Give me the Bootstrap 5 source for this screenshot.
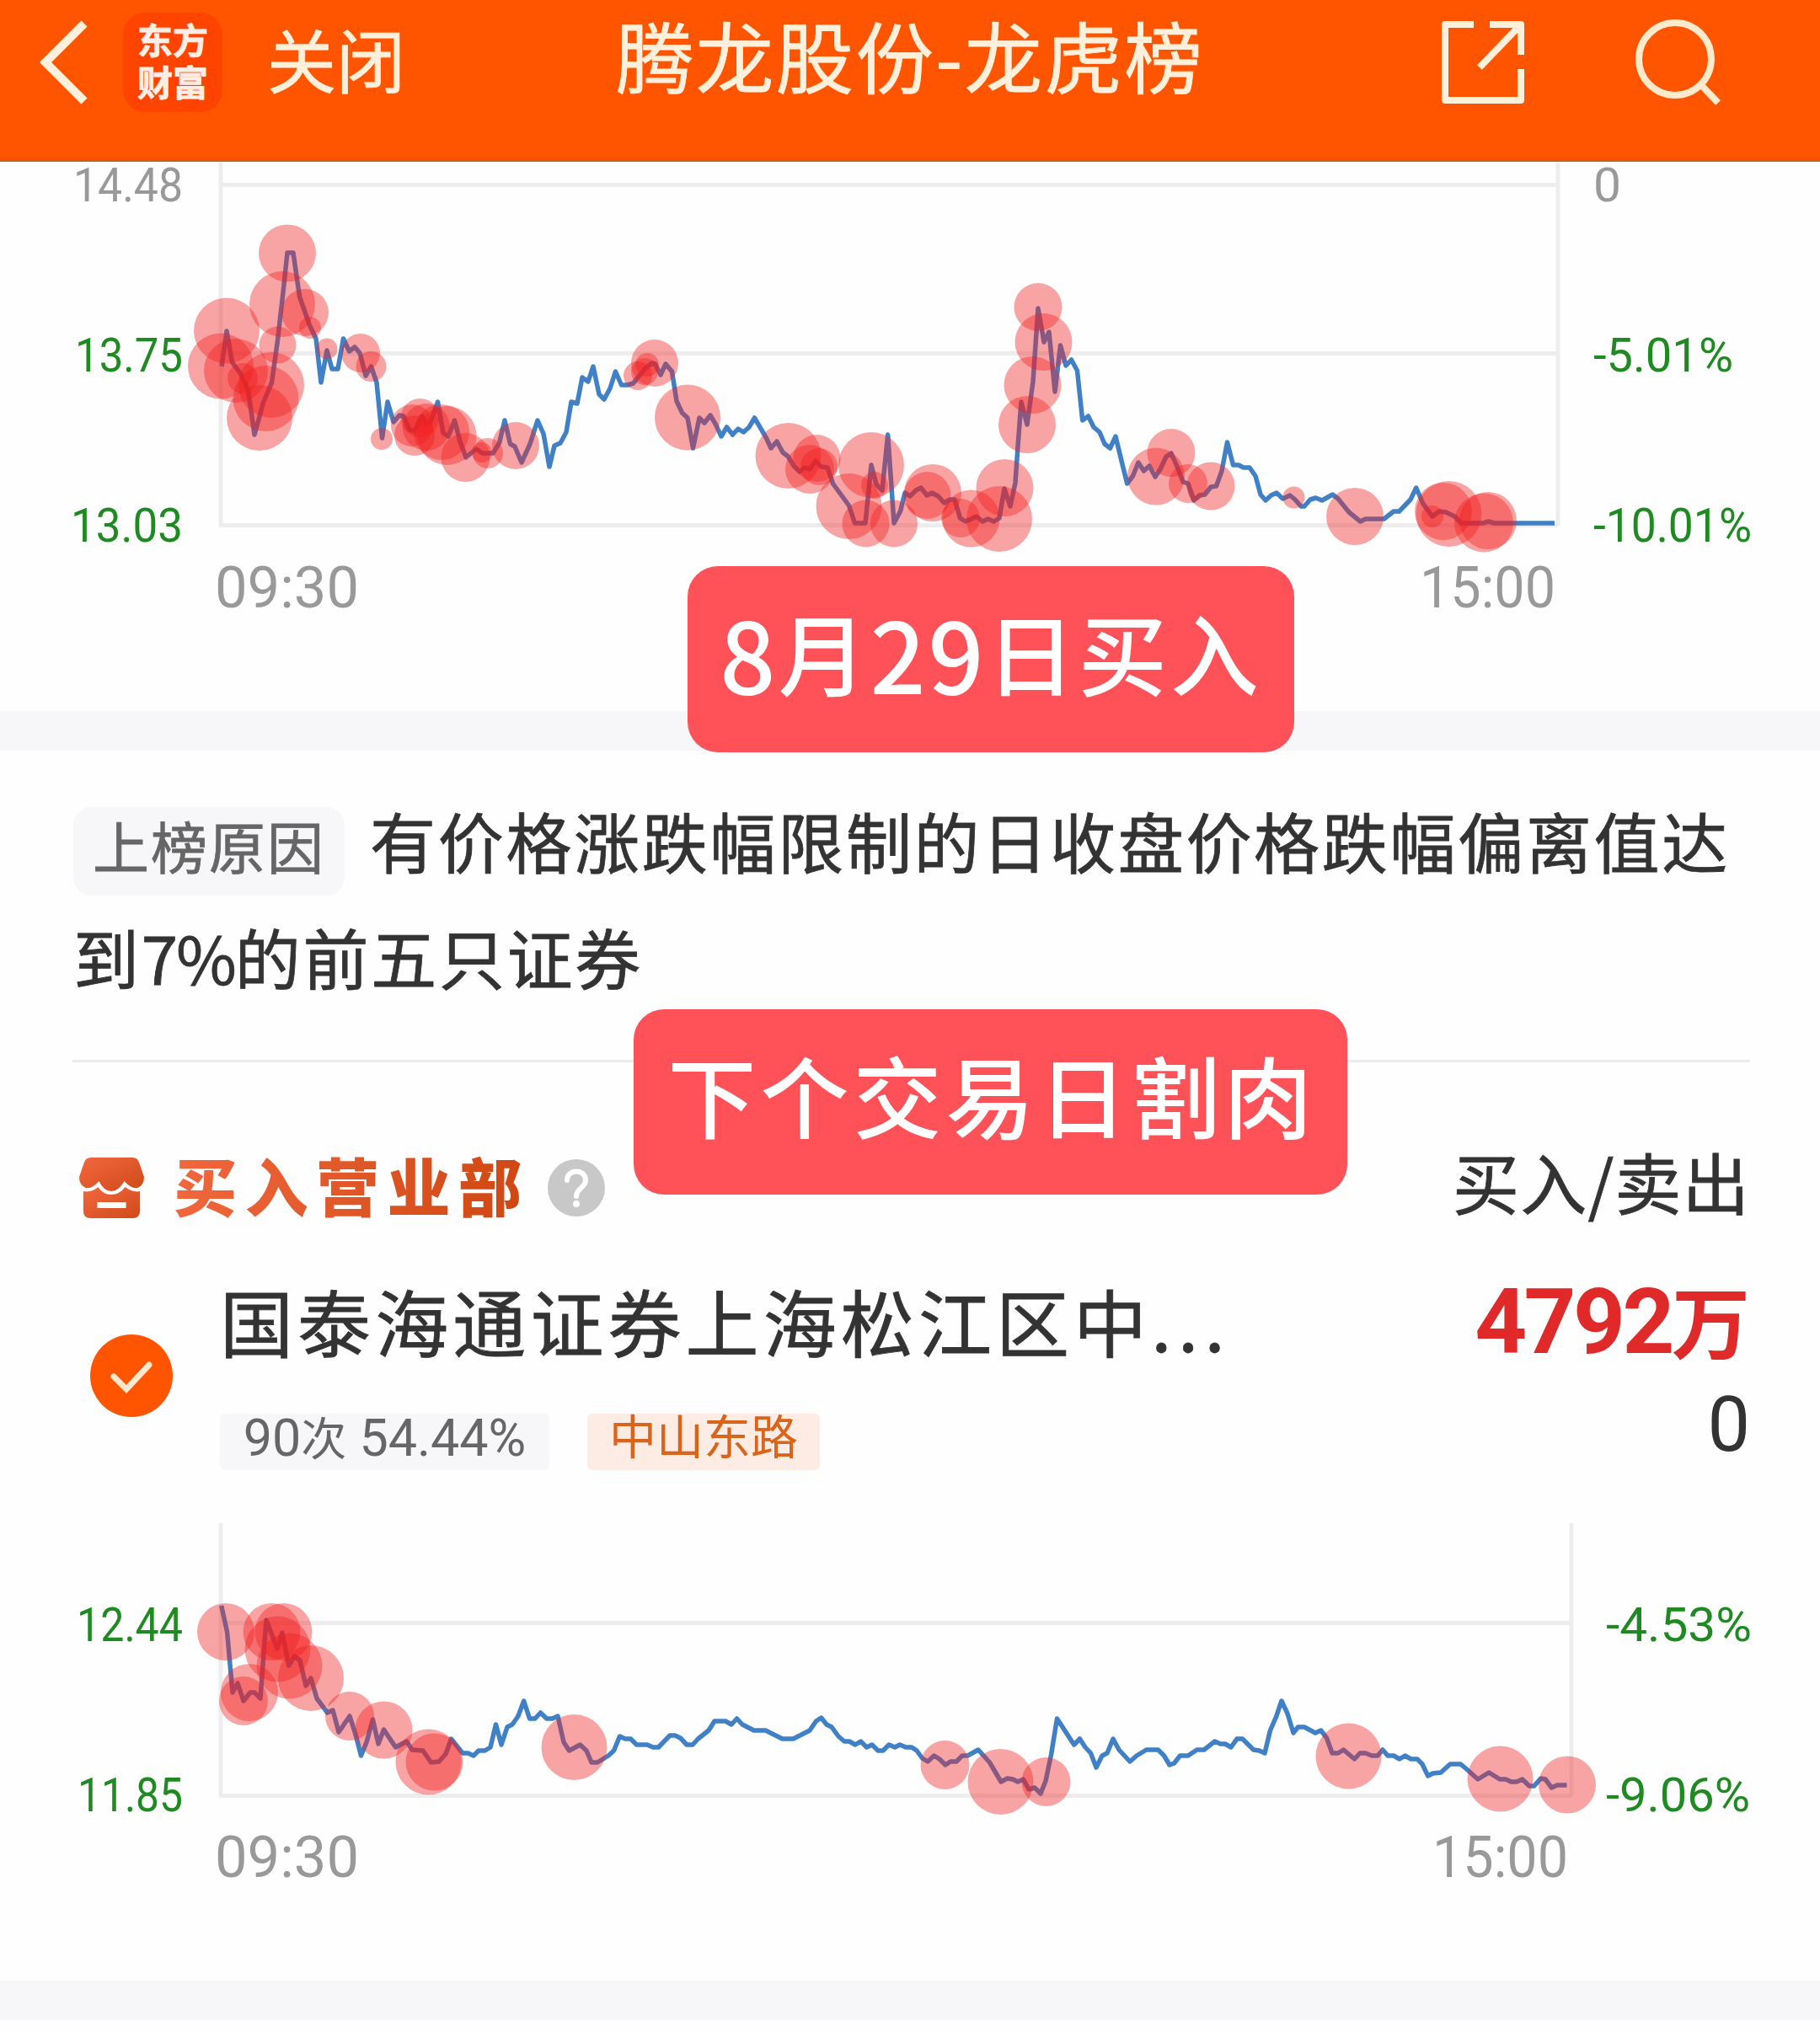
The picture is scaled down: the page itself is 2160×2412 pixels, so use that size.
<!DOCTYPE html>
<html lang="zh-CN">
<head>
<meta charset="utf-8">
<meta name="viewport" content="width=device-width, initial-scale=1">
<title>腾龙股份-龙虎榜</title>
<link href="https://cdn.jsdelivr.net/npm/bootstrap@5.3.0/dist/css/bootstrap.min.css" rel="stylesheet">
<style>
  body { font-family: Roboto, "Noto Sans CJK SC", sans-serif; background: #fefefe; color: #333; overflow-x: hidden; }
  svg { display: block; flex: none; }
  .cjk { font-family: "Noto Sans CJK SC", sans-serif; }
  .topbar, .reason, .broker-name, .side-label { -webkit-text-stroke: .8px currentColor; }
  .topbar { height: 192px; background: #ff5500; color: #fff0dc; border-bottom: 2px solid #cf5a1a;
            display: grid; grid-template-columns: 1fr auto 1fr; padding-bottom: 42px; }
  .topbar-left { padding-left: 40px; }
  .topbar-right { padding-right: 114px; gap: 122px; }
  .brand-tile { width: 118px; height: 118px; border-radius: 26px; background: #ff4400; margin-left: 34px;
               font-size: 42px; line-height: 50px; font-weight: 700; color: #ffeee6; padding-bottom: 6px; }
  .close-link { font-size: 82px; line-height: 1; margin-left: 53px; padding-bottom: 10px; }
  .page-title { font-size: 92.500px; line-height: 1; letter-spacing: 2.300px; padding-bottom: 19px; font-weight: 400; margin: 0; }
  .band { height: 47px; background: #f7f7fa; }
  .note { background: #ff5158; color: #fff; border-radius: 36px; white-space: nowrap; font-weight: 500; z-index: 3; padding-bottom: 20px; }
  .note-buy { left: 816px; top: 672px; width: 720px; height: 221px; font-size: 105px; letter-spacing: 4px; }
  .note-buy b { font: 500 116px/1 "Noto Sans CJK SC", sans-serif; letter-spacing: 3px; }
  .note-cut { left: 752px; top: 1198px; width: 847px; height: 220px; font-size: 105px; letter-spacing: 5px; padding-left: 4px; }
  .reason { padding: 37px 78px 0 87px; font-size: 78px; line-height: 138px; letter-spacing: 2.700px; }
  .reason p { height: 276px; }
  .reason-num { letter-spacing: -2px; }
  .reason-tag { width: 322px; height: 105px; margin: 30px 30px 0 0; padding-bottom: 17px; vertical-align: top;
                background: #f7f7fa; border-radius: 22px; color: #666; font-size: 67px; line-height: 1; letter-spacing: 2px; }
  .rule { margin: 54px 83px 0 86px; height: 3px; background: #ebebeb; }
  .dept-head { margin-top: 99px; height: 100px; padding: 0 83px 0 94px; }
  .dept-title { font-size: 75px; line-height: 100px; font-weight: 900; letter-spacing: 9.500px; margin: 0 0 0 35px; padding-bottom: 8px;
                background: linear-gradient(100deg, #f2683f, #ce4610); -webkit-background-clip: text; color: transparent; }
  .help-mark { margin-left: 21px; }
  .side-label { font-size: 79px; line-height: 100px; padding-bottom: 16px; letter-spacing: 1.200px; }
  .broker { margin-top: 57px; height: 228px; padding: 0 83px 0 107px; }
  .broker-check { margin-top: 67px; }
  .broker-main { margin-left: 56px; }
  .broker-name { font-size: 87px; line-height: 100px; letter-spacing: 5.100px; }
  .broker-name span { letter-spacing: 7.500px; }
  .chips { margin-top: 61px; gap: 45px; }
  .chip { height: 67px; border-radius: 6px; font-size: 56px; line-height: 58px; }
  .chip-rate { width: 391px; background: #f7f7fa; color: #666; white-space: nowrap; font-size: 61px; }
  .chip-rate span { font-size: 54px; }
  .chip-tag { width: 276px; background: #fdece4; color: #d9641c; }
  .amount { font-size: 108px; line-height: 100px; font-weight: 700; color: #e02a2a; letter-spacing: -3.500px; white-space: nowrap; margin-top: 2px; }
  .amount span { font-size: 93px; letter-spacing: 0; }
  .amount-out { font-size: 90px; line-height: 90px; margin-top: 22px; }
  .grid-line { stroke: #ededed; stroke-width: 5; fill: none; }
  .price { stroke: #4080c6; stroke-width: 5.500; fill: none; stroke-linejoin: round; }
  .dots circle { fill: #f21e1e; fill-opacity: .4; }
  .axis { font-family: Roboto, sans-serif; font-size: 56px; fill: #1f8a22; }
  .axis .flat { fill: #999; }
  .axis .hour { fill: #999; font-size: 68px; }
</style>
<script src="https://cdn.jsdelivr.net/npm/bootstrap@5.3.0/dist/js/bootstrap.bundle.min.js"></script>
</head>
<body>
<div class="position-relative">
  <header class="topbar cjk">
    <div class="topbar-left d-flex align-items-center">
      <svg width="72" height="104" viewBox="0 0 72 104"><path d="M60 6 14 52l46 46" fill="none" stroke="#fff0dc" stroke-width="10"/></svg>
      <div class="brand-tile d-flex flex-column align-items-center justify-content-center"><span>东方</span><span>财富</span></div>
      <a class="close-link text-reset text-decoration-none" href="#">关闭</a>
    </div>
    <h1 class="page-title align-self-center">腾龙股份-龙虎榜</h1>
    <div class="topbar-right d-flex align-items-center justify-content-end">
      <svg width="104" height="104" viewBox="0 0 104 104" fill="none" stroke="#fff0dc" stroke-width="8" stroke-linejoin="round"><path d="M41 7H7v90h90V60M60 7h37v36M97 7 48 58"/></svg>
      <svg width="112" height="112" viewBox="0 0 112 112" fill="none" stroke="#ffeacb" stroke-width="8"><circle cx="54" cy="52" r="43"/><path d="m85 83 20 21"/></svg>
    </div>
  </header>

  <svg width="2160" height="652" viewBox="0 192 2160 652">
    <path class="grid-line" d="M260 219.5H1849M260 419.5H1849M260 623.5H1849M262 192V624M1849 192V624"/>
    <polyline class="price" points="263,435 269,393 275.500,430 285,443 294.500,463 302,516 312.500,478 322.500,454 329.500,404 336,347 341,300 348,300 355.500,352 367,385 375,402 381,454 388,416 394,438 401,438 407.500,402 414.500,417 421,412 427,419 434,446 440.500,435 447,454 453.500,520 460,477 467,501 474,493 479,494 486,510 492,512 501,494 506,504 511,501 519.500,477 526,514 532,518 539.500,499 546,524 553,543 565,533 572.500,538 585,538 592.500,526 599,499 605.500,527 611,530 619,549 629,527 638,499 645,515 652,554 658,529 665,526 672,513 678,477 685,479 691,448 698,453 704,435 711,468 717,474 724,461 730.500,441 737.500,457 745,457 751.500,455 766,437 774,431 777.500,432 784,445 790,432 797.500,441 803,476 809.500,490 816,496 822.500,532 830,496 836,502 843,493 849.500,504 856,518 862.500,507 869.500,516 876,509 882.500,513 889,507 895.500,496 909.500,520 915,532 922,524 929,537 935.500,542 942,553 949,560 955,555 961,557 968,547 974.500,554 982,555 988.500,574 1007.500,600 1014.500,621 1027,621 1034,552 1040,575 1047,582 1053.700,516 1061,621 1068.500,607 1074,585 1080,589 1087,582 1093,579 1100,588 1106,585 1113.500,589 1120.500,597 1127.500,593 1133,593 1139.500,615 1146,619 1159,613 1166,619 1172.500,616 1179.500,619 1186,615 1192,580 1199,601 1205,573 1208,530 1212,477 1219,504 1226,453 1232,366 1239,406 1245,394 1252,465 1258.500,410 1265,434 1271.500,427 1278.500,440 1284.700,499 1291.500,494 1298,507 1305,513 1311,527 1317.500,532 1324,518 1331,547 1337.700,574 1344.500,565 1351,549 1357.500,559 1364,553 1371,566 1377,557 1384,542 1390,538 1397.500,555 1404,572 1410,574 1417,594 1423.500,588 1430,587 1437,578 1443.500,577 1450,559 1456.500,525 1463.500,552 1470,552 1476,555 1483,555 1490,565 1496,587 1502,594 1508.500,588 1515,585 1522.500,592 1531,588 1537,593 1544,601 1548,601 1555,593 1561.500,591 1569,594 1581.500,587 1588,592 1601,608 1614.500,619 1620.500,616 1642.500,616 1654,607 1660.500,607 1674,593 1680.700,579 1689,598 1700,613 1708,607 1716,608 1726.500,613 1734,621 1760,621 1766.500,619 1773,621 1845,621"/>
    <g class="dots">
      <circle cx="341" cy="300.500" r="34"/><circle cx="335" cy="361" r="39"/><circle cx="362" cy="371" r="28"/><circle cx="368" cy="389" r="13"/>
      <circle cx="269" cy="392.500" r="39"/><circle cx="262" cy="434.500" r="39"/><circle cx="280" cy="440" r="38"/><circle cx="288" cy="449" r="18"/>
      <circle cx="329.500" cy="409.500" r="22"/><circle cx="322" cy="457" r="39"/><circle cx="315.500" cy="473" r="39"/><circle cx="308" cy="496" r="39"/>
      <circle cx="388" cy="414" r="12.500"/><circle cx="428" cy="419" r="23"/><circle cx="440.500" cy="435" r="18"/><circle cx="453" cy="521" r="13"/>
      <circle cx="498.500" cy="496" r="23"/><circle cx="489" cy="505" r="25"/><circle cx="492" cy="517" r="24"/><circle cx="506" cy="507" r="28"/>
      <circle cx="530.500" cy="517" r="35"/><circle cx="524" cy="513" r="33"/><circle cx="552.500" cy="543" r="29"/><circle cx="572" cy="537" r="12"/>
      <circle cx="579" cy="538" r="18"/><circle cx="612" cy="529" r="28"/><circle cx="777" cy="431" r="28"/><circle cx="757" cy="446" r="17"/>
      <circle cx="768" cy="433" r="14"/><circle cx="765" cy="441" r="16"/><circle cx="816" cy="495.500" r="39"/><circle cx="935.500" cy="541" r="39"/>
      <circle cx="969.500" cy="544" r="28"/><circle cx="961" cy="557" r="29"/><circle cx="972" cy="554" r="22"/><circle cx="1034" cy="552" r="39"/>
      <circle cx="1007.500" cy="601" r="39"/><circle cx="1038" cy="576" r="16"/><circle cx="1027.500" cy="621.500" r="28"/><circle cx="1061" cy="621.500" r="28"/>
      <circle cx="1107" cy="585" r="34"/><circle cx="1100.500" cy="588" r="28"/><circle cx="1152.500" cy="615.500" r="34"/><circle cx="1140" cy="615" r="23"/>
      <circle cx="1186" cy="616" r="39"/><circle cx="1192.500" cy="579" r="34"/><circle cx="1219" cy="504" r="34"/><circle cx="1225.500" cy="457" r="34"/>
      <circle cx="1238.500" cy="406" r="34"/><circle cx="1232" cy="364.500" r="28.500"/><circle cx="1372" cy="565.500" r="34"/><circle cx="1390" cy="537.500" r="28.500"/>
      <circle cx="1410" cy="574" r="23"/><circle cx="1437" cy="577" r="28.500"/><circle cx="1535.500" cy="590.500" r="13"/><circle cx="1608" cy="613" r="34"/>
      <circle cx="1719.500" cy="610" r="39"/><circle cx="1713" cy="607" r="34"/><circle cx="1700" cy="613" r="13"/><circle cx="1766" cy="618" r="34"/><circle cx="1761" cy="620.500" r="35"/>
    </g>
    <g class="axis">
      <text class="flat" x="87" y="239" textLength="130" lengthAdjust="spacingAndGlyphs">14.48</text>
      <text x="89" y="441" textLength="128" lengthAdjust="spacingAndGlyphs">13.75</text>
      <text x="84" y="643" textLength="133" lengthAdjust="spacingAndGlyphs">13.03</text>
      <text class="flat" x="1891" y="239" textLength="33" lengthAdjust="spacingAndGlyphs">0</text>
      <text x="1891" y="441" textLength="166" lengthAdjust="spacingAndGlyphs">-5.01%</text>
      <text x="1891" y="643" textLength="188" lengthAdjust="spacingAndGlyphs">-10.01%</text>
      <text class="hour" x="255" y="721" textLength="171" lengthAdjust="spacingAndGlyphs">09:30</text>
      <text class="hour" x="1685" y="721" textLength="161" lengthAdjust="spacingAndGlyphs">15:00</text>
    </g>
  </svg>

  <div class="band"></div>

  <section class="reason cjk">
    <p class="mb-0"><span class="reason-tag d-inline-flex align-items-center justify-content-center">上榜原因</span>有价格涨跌幅限制的日收盘价格跌幅偏离值达到<span class="reason-num">7%</span>的前五只证券</p>
  </section>
  <div class="rule"></div>

  <section>
    <div class="dept-head d-flex align-items-center">
      <svg width="77" height="72" viewBox="0 0 79 72" preserveAspectRatio="none">
        <defs><linearGradient id="shop" x2="1" y2="1"><stop stop-color="#f2683f"/><stop offset="1" stop-color="#cf4a18"/></linearGradient></defs>
        <path fill="url(#shop)" d="M14 0h51q6 0 8 6l6 17q0 10-8 13-7 2-16-8-7 12-16 12t-15-12q-9 10-16 8-8-3-8-13L6 6q2-6 8-6Z"/>
        <path fill="url(#shop)" fill-rule="evenodd" d="M5 40q10 2 18-5 6 9 16 9t17-9q9 7 18 5v23q0 9-9 9H14q-9 0-9-9ZM22 53v7h35v-7Z"/>
      </svg>
      <h2 class="dept-title cjk">买入营业部</h2>
      <svg class="help-mark" width="68" height="68" viewBox="0 0 68 68"><circle cx="34" cy="34" r="34" fill="#c8c8c8"/><path d="M23 25c0-14 22-14 22 0 0 9-11 9-11 19" fill="none" stroke="#fff" stroke-width="6" stroke-linecap="round"/><circle cx="34" cy="53" r="4" fill="#fff"/></svg>
      <span class="side-label cjk ms-auto">买入/卖出</span>
    </div>

    <div class="broker d-flex">
      <svg class="broker-check" width="98" height="98" viewBox="0 0 98 98"><circle cx="49" cy="49" r="49" fill="#ff5500"/><path d="m28 50 15 15 27-29" fill="none" stroke="#ffe8d0" stroke-width="7" stroke-linecap="round"/></svg>
      <div class="broker-main">
        <div class="broker-name cjk">国泰海通证券上海松江区中<span>...</span></div>
        <div class="chips d-flex">
          <span class="chip chip-rate text-center">90<span>次</span> 54.44%</span>
          <span class="chip chip-tag text-center">中山东路</span>
        </div>
      </div>
      <div class="ms-auto text-end">
        <div class="amount">4792<span>万</span></div>
        <div class="amount-out">0</div>
      </div>
    </div>

    <svg width="2160" height="606" viewBox="0 1745 2160 606">
      <path class="grid-line" d="M260 1926.500H1865M260 2131.500H1865M262 1808V2132M1865 1808V2132"/>
      <polyline class="price" points="262.700,1906 269.500,1937 276,2009 282,1998 289,2019 297,2009 302,2009 309,2016 316,1923 329,1957 335,1938 342.700,1977 349.500,1966 356,1971 363,2001 369,1992 376,2016 388.500,2033 395,2030 402,2056 415,2037 422,2059 428.500,2084 435,2068 442.500,2041 449,2070 455.500,2053 469.500,2074 482.500,2067 489,2077 502,2078 511.500,2092 521,2091 529,2082 535.500,2064 549,2081 555.500,2081 562,2084 568,2078 575.500,2078 582,2074 588.500,2047 595,2071 602,2050 608,2047 615,2037 621.700,2019 628.500,2040 635,2040 641.500,2033 648.700,2040 655.500,2040 662,2037 669,2068 675.500,2078 688.500,2071 696,2078 702,2092 709,2092 722,2084 728.500,2078 735.500,2061 742,2064 748.500,2064 755.500,2071 768,2071 775,2074 781.500,2074 795,2060 801,2060 807.500,2063 815,2071 822,2071 828.500,2064 841,2054 848,2043 861,2043 868,2047 874.500,2040 881,2047 894.700,2054 908.500,2054 928.500,2064 941.500,2064 961,2054 968.500,2043 974.700,2039 981,2047 987,2050 995,2061 1002,2067 1008,2067 1015,2071 1021.500,2067 1028.500,2074 1035,2071 1042,2078 1048,2078 1055,2071 1062,2074 1068,2071 1075,2074 1082,2074 1088,2078 1094.500,2087 1101,2091 1108.500,2084 1115,2088 1122,2095 1128,2091 1135,2091 1142,2084 1148.500,2084 1161,2077 1174.500,2092 1188,2115 1195.500,2111 1202,2112 1208,2115 1214.500,2112 1221,2124 1228,2122 1235,2129 1241,2114 1247.500,2083 1254.500,2040 1274.700,2071 1281.500,2064 1288,2074 1294.500,2081 1301,2098 1308,2084 1314,2081 1321,2064 1328,2077 1341,2091 1349,2084 1360.500,2077 1374.500,2077 1381.500,2084 1388,2095 1393.500,2093 1400.500,2084 1410,2084 1420.500,2077 1429,2077 1441.700,2067 1448.500,2070 1454,2070 1461,2074 1468,2064 1474.500,2064 1487.700,2077 1494.500,2078 1501,2081 1507.500,2054 1514.500,2038 1521,2019 1528,2034 1535,2057 1540.500,2050 1548,2050 1561,2057 1567.700,2054 1574.500,2063 1581,2081 1588,2081 1594.500,2077 1607.500,2088 1614,2081 1620.500,2081 1628,2084 1635,2084 1641,2077 1647,2084 1654,2084 1661,2088 1667.500,2084 1674.500,2088 1682,2088 1688,2094 1694.700,2108 1700.500,2105 1710,2104 1721,2094 1733.500,2094 1741.700,2101 1754,2112 1767,2104 1780,2112 1787,2112 1793.500,2115 1800,2115 1806.700,2112 1815,2120 1820.700,2120 1828.500,2111 1834,2112 1841.500,2122 1848,2119 1859.500,2119"/>
      <g class="dots">
        <circle cx="268" cy="1937" r="34"/><circle cx="296" cy="2009" r="34"/><circle cx="289" cy="2019" r="29"/><circle cx="322.500" cy="1937" r="34"/>
        <circle cx="336.500" cy="1937" r="34"/><circle cx="329.500" cy="1957.500" r="39"/><circle cx="343.500" cy="1977.500" r="39"/><circle cx="369" cy="1992" r="39"/>
        <circle cx="415" cy="2037" r="29"/><circle cx="455.500" cy="2053.500" r="34"/><circle cx="508.500" cy="2091.500" r="39"/><circle cx="515.500" cy="2091.500" r="34"/>
        <circle cx="681.500" cy="2074" r="39"/><circle cx="1121.500" cy="2095" r="29"/><circle cx="1187.500" cy="2115" r="39"/><circle cx="1241.500" cy="2115" r="29"/>
        <circle cx="1600.500" cy="2084.500" r="39"/><circle cx="1780.500" cy="2111.500" r="39"/><circle cx="1860" cy="2118.500" r="34"/>
      </g>
      <g class="axis">
        <text x="91" y="1948" textLength="126" lengthAdjust="spacingAndGlyphs">12.44</text>
        <text x="92" y="2150" textLength="125" lengthAdjust="spacingAndGlyphs">11.85</text>
        <text x="1906" y="1948" textLength="173" lengthAdjust="spacingAndGlyphs">-4.53%</text>
        <text x="1906" y="2150" textLength="171" lengthAdjust="spacingAndGlyphs">-9.06%</text>
        <text class="hour" x="255" y="2228" textLength="171" lengthAdjust="spacingAndGlyphs">09:30</text>
        <text class="hour" x="1700" y="2228" textLength="161" lengthAdjust="spacingAndGlyphs">15:00</text>
      </g>
    </svg>
  </section>

  <div class="band"></div>

  <div class="note note-buy cjk position-absolute d-flex align-items-center justify-content-center"><b>8</b>月<b>29</b>日买入</div>
  <div class="note note-cut cjk position-absolute d-flex align-items-center justify-content-center">下个交易日割肉</div>
</div>
</body>
</html>
